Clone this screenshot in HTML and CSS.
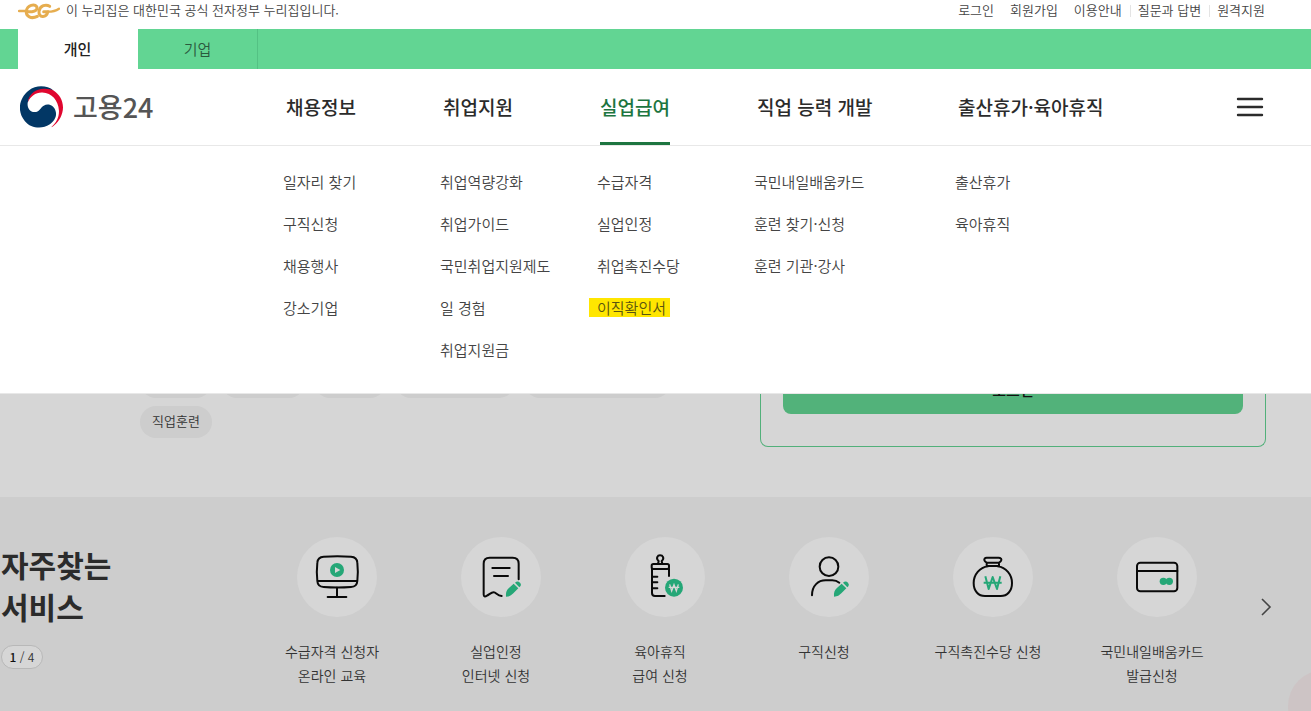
FILE: index.html
```html
<!DOCTYPE html>
<html lang="ko">
<head>
<meta charset="utf-8">
<meta name="viewport" content="width=device-width, initial-scale=1">
<title>고용24</title>
<link rel="stylesheet" href="styles.css">
</head>
<body>
<div class="page">
<header class="header">
  <div class="topbar">
    <p class="gov-note">
      <svg class="gov-mark" viewBox="0 0 126 54" aria-hidden="true">
        <g fill="none" stroke="#e6ad4f" stroke-width="9" stroke-linecap="round" stroke-linejoin="round">
          <path stroke-width="7" d="M3 27H28"/>
          <path d="M26 29H42C52 28 60 22 56 14C50 5 28 8 25 27C23 44 40 52 58 43"/>
          <path d="M95 13C84 6 66 10 63 28C61 47 84 50 90 29H77"/>
          <path stroke-width="7" d="M90 29C103 29 114 26 123 20"/>
        </g>
      </svg>
      이 누리집은 대한민국 공식 전자정부 누리집입니다.
    </p>
    <ul class="util">
      <li><a href="#">로그인</a></li>
      <li><a href="#">회원가입</a></li>
      <li><a href="#">이용안내</a></li>
      <li class="divided"><a href="#">질문과 답변</a></li>
      <li class="divided"><a href="#">원격지원</a></li>
    </ul>
  </div>
  <div class="tabs">
    <a class="tab tab-on" href="#">개인</a>
    <a class="tab" href="#">기업</a>
  </div>
  <div class="gnb">
    <a class="logo" href="#">
      <svg class="logo-mark" viewBox="0 0 127 124" aria-hidden="true">
        <path fill="#023765" d="M99 13C80-2 48-4 26 13C-4 36-9 76 14 103C32 126 66 128 87 114C102 104 110 88 105 74C101 58 84 50 70 58C60 64 57 77 43 77C28 77 20 62 23 48C29 26 52 12 76 12Z"/>
        <path fill="#e0062f" d="M23 48C26 22 48 8 70 8C82 7 92 10 99 13C120 26 132 52 125 78C119 100 106 115 92 122C108 108 116 92 115 72C113 42 94 20 66 19C47 18 31 30 23 48Z"/>
      </svg>
      <span>고용24</span>
    </a>
    <nav class="menu-grid menu-main" aria-label="주메뉴">
      <a href="#">채용정보</a>
      <a href="#">취업지원</a>
      <a class="current" href="#">실업급여</a>
      <a href="#">직업 능력 개발</a>
      <a href="#">출산휴가·육아휴직</a>
    </nav>
    <button class="burger" type="button" aria-label="전체메뉴">
      <svg viewBox="0 0 26 20"><path d="M1 2H25M1 10H25M1 18H25" stroke="#2b2b2b" stroke-width="2.4" stroke-linecap="round"/></svg>
    </button>
  </div>
  <div class="mega">
    <div class="menu-grid menu-sub">
      <ul>
        <li><a href="#">일자리 찾기</a></li>
        <li><a href="#">구직신청</a></li>
        <li><a href="#">채용행사</a></li>
        <li><a href="#">강소기업</a></li>
      </ul>
      <ul>
        <li><a href="#">취업역량강화</a></li>
        <li><a href="#">취업가이드</a></li>
        <li><a href="#">국민취업지원제도</a></li>
        <li><a href="#">일 경험</a></li>
        <li><a href="#">취업지원금</a></li>
      </ul>
      <ul>
        <li><a href="#">수급자격</a></li>
        <li><a href="#">실업인정</a></li>
        <li><a href="#">취업촉진수당</a></li>
        <li><a class="marked" href="#">이직확인서</a></li>
      </ul>
      <ul>
        <li><a href="#">국민내일배움카드</a></li>
        <li><a href="#">훈련 찾기·신청</a></li>
        <li><a href="#">훈련 기관·강사</a></li>
      </ul>
      <ul>
        <li><a href="#">출산휴가</a></li>
        <li><a href="#">육아휴직</a></li>
      </ul>
    </div>
  </div>
</header>

<main class="main">
  <section class="hero">
    <div class="chips">
      <span class="chip"></span>
      <span class="chip chip-b"></span>
      <span class="chip"></span>
      <span class="chip chip-c"></span>
      <span class="chip chip-d"></span>
      <a class="chip" href="#">직업훈련</a>
    </div>
    <div class="login-card">
      <button class="login" type="button">로그인</button>
    </div>
  </section>

  <section class="services">
    <div class="services-head">
      <h2>자주찾는<br>서비스</h2>
      <p class="pager"><strong>1</strong> / 4</p>
    </div>
    <ul class="service-list">
      <li><a href="#">
        <span class="disc"><svg viewBox="0 0 240 240">
          <g class="line"><path d="M80 59Q121 56 162 59Q180 60 181 77Q184 104 181 132Q180 149 162 150Q121 153 80 150Q62 149 61 132Q58 104 61 77Q62 60 80 59ZM61 132H181M120 151V180M92 180H148"/></g>
          <circle class="fill" cx="120" cy="99" r="21"/><path class="cut" d="M114 90V108L130 99Z"/>
        </svg></span>
        수급자격 신청자<br>온라인 교육</a></li>
      <li><a href="#">
        <span class="disc"><svg viewBox="0 0 240 240">
          <g class="line"><path d="M173 127V80Q173 62 155 62H86Q68 62 68 80V172Q68 182 78 176C88 170 91 166 98 166C106 166 108 176 122 177M94 93H146M99 117H141"/></g>
          <path class="fill" d="M135 179C134 166 137 160 143 154L158 140L172 154L157 169C151 175 146 179 135 179ZM162 137L166 134Q172 132 177 137Q182 143 178 148L175 151Z"/>
        </svg></span>
        실업인정<br>인터넷 신청</a></li>
      <li><a href="#">
        <span class="disc"><svg viewBox="0 0 240 240">
          <g class="line"><path d="M99 81L101 72Q94 67 97 60Q99 55 105 55Q112 55 114 60Q117 67 110 72L112 81"/><rect x="80" y="81" width="52" height="15" rx="5"/><path d="M81 96V168Q81 177 90 177H119M132 96V117M81 119H97M81 136H97M81 154H97"/></g>
          <circle class="fill" cx="147" cy="152" r="27"/><path class="cut-line" d="M134 142L140 162L147 143L154 162L160 142M131 151H163"/>
        </svg></span>
        육아휴직<br>급여 신청</a></li>
      <li><a href="#">
        <span class="disc"><svg viewBox="0 0 240 240">
          <g class="line"><circle cx="120" cy="89" r="28"/><path d="M69 175C69 145 88 130 110 130H130Q142 130 151 137"/></g>
          <path class="fill" d="M135 179C134 166 137 160 143 154L158 140L172 154L157 169C151 175 146 179 135 179ZM162 137L166 134Q172 132 177 137Q182 143 178 148L175 151Z"/>
        </svg></span>
        구직신청</a></li>
      <li><a href="#">
        <span class="disc"><svg viewBox="0 0 240 240">
          <g class="line"><path d="M101 77Q91 71 95 65Q97 62 101 62H137Q141 62 144 65Q148 71 138 77ZM101 77V87H138V77M105 88C80 91 62 113 62 138C62 162 76 177 96 177H143C163 177 177 162 177 138C177 113 159 91 134 88"/></g>
          <path class="won" d="M97 118L107 156L119 120L132 156L142 118M92 137H146"/>
        </svg></span>
        구직촉진수당 신청</a></li>
      <li><a href="#">
        <span class="disc"><svg viewBox="0 0 240 240">
          <g class="line"><rect x="60" y="77" width="121" height="86" rx="10"/><path d="M60 102H181"/></g>
          <circle class="fill" cx="139" cy="133" r="11"/><circle class="fill" cx="157" cy="133" r="11"/>
        </svg></span>
        국민내일배움카드<br>발급신청</a></li>
    </ul>
    <button class="next" type="button" aria-label="다음">
      <svg viewBox="0 0 12 20"><path d="M2 2L10 10L2 18" fill="none" stroke="#444" stroke-width="1.6"/></svg>
    </button>
    <span class="bubble"></span>
  </section>
</main>
</div>
</body>
</html>
```

FILE: styles.css
```css
* { box-sizing: border-box; }

body {
  margin: 0;
  font-family: "Noto Sans CJK KR", "Noto Sans", sans-serif;
  font-size: 15px;
  font-weight: 350;
  color: #333;
  background: #cdcdcd;
}

ul, p, h2 { margin: 0; padding: 0; list-style: none; }
a { color: inherit; text-decoration: none; }
button { padding: 0; border: 0; background: none; font: inherit; cursor: pointer; }
svg { display: block; }

.page { min-height: 100vh; display: flex; flex-direction: column; }
.main { flex: 1; display: flex; flex-direction: column; }

/* Header */
.header { position: relative; z-index: 2; background: #fff; }

.topbar {
  display: flex;
  justify-content: space-between;
  height: 29px;
  padding: 0 46px 0 18px;
  font-size: 13px;
  line-height: 20px;
  color: #444;
}
.gov-note { display: flex; gap: 6px; }
.gov-mark { width: 42px; height: 18px; margin-top: 2px; }
.util { display: flex; gap: 16px; }
.divided { position: relative; }
.divided::before {
  content: "";
  position: absolute;
  left: -8px;
  top: 5px;
  height: 12px;
  border-left: 1px solid #e4e4e4;
}

.tabs { display: flex; height: 40px; padding-left: 18px; background: #62d593; }
.tab {
  width: 120px;
  line-height: 40px;
  text-align: center;
  color: #2a5a3e;
  border-right: 1px solid #54c184;
}
.tab-on { background: #fff; color: #222; font-weight: 500; border-color: #fff; }

.gnb {
  display: flex;
  align-items: center;
  height: 77px;
  padding: 0 47px 0 20px;
  border-bottom: 1px solid #e8e8e8;
}
.logo {
  display: flex;
  align-items: center;
  gap: 10px;
  width: 266px;
  font-size: 27px;
  font-weight: 500;
  line-height: 40px;
  color: #555;
}
.logo-mark { width: 43px; height: 42px; }

.menu-grid { display: grid; grid-template-columns: 157px 157px 157px 201px 1fr; }
.menu-main { flex: 1; font-size: 19px; font-weight: 500; line-height: 75px; color: #2b2b2b; }
.menu-main a { justify-self: start; height: 76px; }
.menu-main .current { color: #1d7540; border-bottom: 3px solid #1d7540; }
.burger svg { width: 28px; height: 20px; }

.mega {
  position: absolute;
  top: 100%;
  left: 0;
  right: 0;
  padding: 15px 45px 22px 283px;
  background: #fff;
  border-bottom: 1px solid #e8e8e8;
}
.menu-sub { color: #444; line-height: 42px; }
.marked {
  margin-left: -8px;
  padding: 0 4px 0 8px;
  background: linear-gradient(#ffe600, #ffe600) center / 100% 19px no-repeat;
  color: #5a5410;
}

/* Search keywords and login */
.hero {
  display: flex;
  justify-content: space-between;
  align-items: flex-start;
  padding: 220px 45px 50px 140px;
  background: #d6d6d6;
}
.chips { display: flex; flex-wrap: wrap; gap: 8px 9px; width: 560px; }
.chip {
  width: 72px;
  height: 32px;
  border-radius: 16px;
  background: #cdcdcd;
  font-size: 13px;
  line-height: 30px;
  text-align: center;
}
.chip-b { width: 84px; }
.chip-c { width: 120px; }
.chip-d { width: 147px; }
.login-card {
  width: 506px;
  padding: 0 22px 32px;
  border: 1px solid #52b07a;
  border-top: 0;
  border-radius: 0 0 8px 8px;
}
.login {
  display: block;
  width: 100%;
  height: 48px;
  border-radius: 8px;
  background: #52b27a;
  font-weight: 500;
  line-height: 46px;
  color: #111;
}

/* Frequently used services */
.services {
  position: relative;
  flex: 1;
  display: flex;
  align-items: flex-start;
  padding: 40px 39px 22px 1px;
  overflow: hidden;
  background: #cdcdcd;
}
.services-head { width: 249px; padding-top: 6px; }
.services-head h2 { font-size: 30px; line-height: 42px; color: #2b2b2b; }
.pager {
  width: 42px;
  height: 24px;
  margin-top: 18px;
  border: 1px solid #b8b8b8;
  border-radius: 12px;
  background: #d6d6d6;
  font-size: 12px;
  line-height: 22px;
  text-align: center;
}
.pager strong { font-weight: 500; color: #111; }
.service-list { flex: 1; display: grid; grid-template-columns: repeat(6, 1fr); }
.service-list a { display: block; text-align: center; font-size: 14px; line-height: 24px; }
.disc {
  display: block;
  width: 80px;
  margin: 0 0 22px calc(50% - 35px);
  border-radius: 50%;
  background: #d6d6d6;
}
.line { fill: none; stroke: #0a0a0a; stroke-width: 6; stroke-linecap: round; stroke-linejoin: round; }
.fill { fill: #25a777; }
.cut { fill: #d6d6d6; }
.cut-line { fill: none; stroke: #d6d6d6; stroke-width: 4; }
.won { fill: none; stroke: #25a777; stroke-width: 6; stroke-linejoin: round; }
.next { width: 38px; padding: 60px 0 0 26px; }
.next svg { width: 12px; height: 20px; }
.bubble {
  position: absolute;
  right: -49px;
  bottom: -31px;
  width: 72px;
  height: 72px;
  border-radius: 50%;
  background: #cdc4c5;
}
```
